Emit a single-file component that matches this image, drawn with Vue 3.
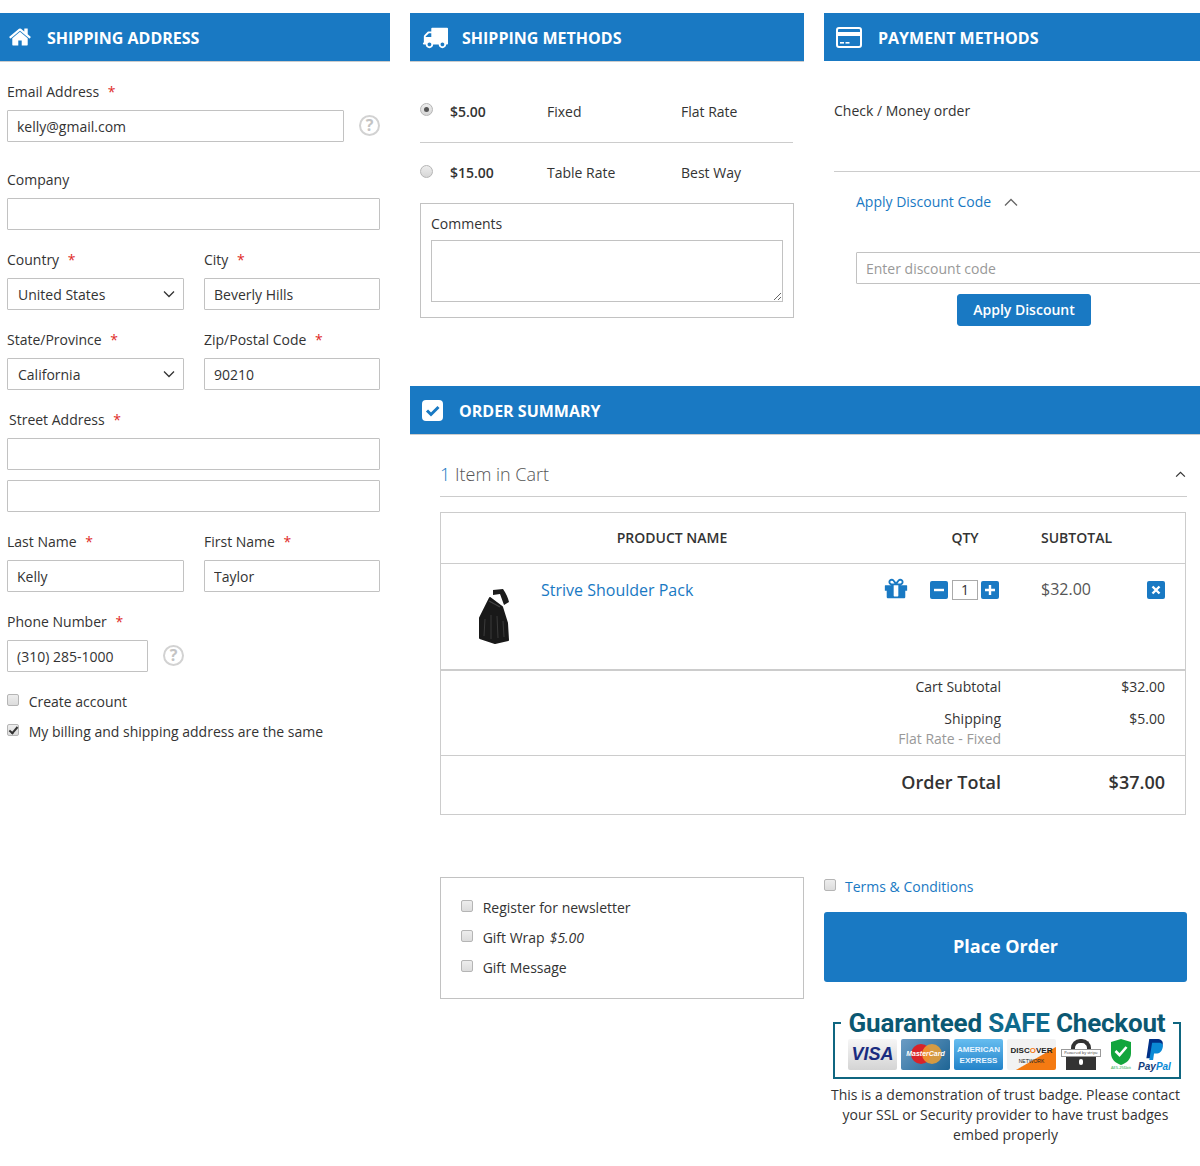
<script setup>
const methods = [
  { price: '$5.00', title: 'Fixed', carrier: 'Flat Rate', checked: true },
  { price: '$15.00', title: 'Table Rate', carrier: 'Best Way', checked: false }
]
const extras = ['Register for newsletter', 'Gift Wrap', 'Gift Message']
</script>

<template>
  <div class="page">
    <!-- 左栏：收货地址 -->
    <section class="address">
      <h2 class="bar bar-line">
        <svg class="bar-icon home" viewBox="0 0 1792 1792"><path fill="#fff" d="M1472 992v480q0 26-19 45t-45 19h-384v-384h-256v384h-384q-26 0-45-19t-19-45v-480q0-1 .5-3t.5-3l575-474 575 474q1 2 1 6zm223-69l-62 74q-8 9-21 11h-3q-13 0-21-7l-692-577-692 577q-12 8-24 7-13-2-21-11l-62-74q-8-10-7-23.5t11-21.5l719-599q32-26 76-26t76 26l244 204v-195q0-14 9-23t23-9h192q14 0 23 9t9 23v408l219 182q10 8 11 21.5t-7 23.5z"/></svg>
        <span class="bar-text">Shipping Address</span>
      </h2>
      <form class="form">
        <div class="field email">
          <label>Email Address <i>*</i></label>
          <div class="with-help">
            <input class="input" value="kelly@gmail.com" />
            <span class="help">?</span>
          </div>
        </div>
        <div class="field">
          <label>Company</label>
          <input class="input" />
        </div>
        <div class="two">
          <div class="field">
            <label>Country <i>*</i></label>
            <div class="select-wrap">
              <select class="input select"><option>United States</option></select>
              <svg class="caret" viewBox="0 0 12 8"><path d="M1 1.500l5 5 5-5" fill="none" stroke="#333" stroke-width="1.300"/></svg>
            </div>
          </div>
          <div class="field">
            <label>City <i>*</i></label>
            <input class="input" value="Beverly Hills" />
          </div>
        </div>
        <div class="two">
          <div class="field">
            <label>State/Province <i>*</i></label>
            <div class="select-wrap">
              <select class="input select"><option>California</option></select>
              <svg class="caret" viewBox="0 0 12 8"><path d="M1 1.500l5 5 5-5" fill="none" stroke="#333" stroke-width="1.300"/></svg>
            </div>
          </div>
          <div class="field">
            <label>Zip/Postal Code <i>*</i></label>
            <input class="input" value="90210" />
          </div>
        </div>
        <div class="field street">
          <label>Street Address <i>*</i></label>
          <input class="input" />
          <input class="input" />
        </div>
        <div class="two">
          <div class="field">
            <label>Last Name <i>*</i></label>
            <input class="input" value="Kelly" />
          </div>
          <div class="field">
            <label>First Name <i>*</i></label>
            <input class="input" value="Taylor" />
          </div>
        </div>
        <div class="field phone">
          <label>Phone Number <i>*</i></label>
          <div class="with-help">
            <input class="input" value="(310) 285-1000" />
            <span class="help">?</span>
          </div>
        </div>
        <label class="check"><input type="checkbox" class="box" /> Create account</label>
        <label class="check"><input type="checkbox" class="box" checked /> My billing and shipping address are the same</label>
      </form>
    </section>

    <div class="main">
      <div class="top">
        <!-- 配送方式 -->
        <section class="shipping">
          <h2 class="bar bar-line">
            <svg class="bar-icon truck" viewBox="0 0 1792 1792"><path fill="#fff" d="M640 1408q0-52-38-90t-90-38-90 38-38 90 38 90 90 38 90-38 38-90zm-384-512h384v-256h-158q-13 0-22 9l-195 195q-9 9-9 22v30zm1280 512q0-52-38-90t-90-38-90 38-38 90 38 90 90 38 90-38 38-90zm256-1088v1024q0 15-4 26.500t-13.500 18.500-16.500 11.500-23.500 6-22.500 2-25.500 0-22.500-.5q0 106-75 181t-181 75-181-75-75-181h-384q0 106-75 181t-181 75-181-75-75-181h-64q-3 0-22.500.5t-25.500 0-22.500-2-23.500-6-16.500-11.500-13.500-18.500-4-26.500q0-26 19-45t45-19v-320q0-8-.5-35t0-38 2.500-34.500 6.500-37 14-30.500 22.500-30l198-198q19-19 50.500-32t58.500-13h160v-192q0-26 19-45t45-19h1024q26 0 45 19t19 45z"/></svg>
            <span class="bar-text">Shipping Methods</span>
          </h2>
          <div class="rates">
            <div v-for="m in methods" :key="m.title" class="rate">
              <input type="radio" name="rate" class="radio" :checked="m.checked" />
              <b>{{ m.price }}</b>
              <span>{{ m.title }}</span>
              <span>{{ m.carrier }}</span>
            </div>
          </div>
          <div class="comments">
            <label>Comments</label>
            <textarea></textarea>
          </div>
        </section>

        <!-- 支付方式 -->
        <section class="payment">
          <h2 class="bar">
            <svg class="bar-icon card" viewBox="0 0 26 21">
              <rect x="1" y="1" width="24" height="19" rx="2" fill="none" stroke="#fff" stroke-width="2"/>
              <rect x="1" y="5" width="24" height="4" fill="#fff"/>
              <rect x="4" y="15" width="4" height="1.600" fill="#fff"/>
              <rect x="9.500" y="15" width="4" height="1.600" fill="#fff"/>
            </svg>
            <span class="bar-text">Payment Methods</span>
          </h2>
          <div class="pay-body">
            <p class="pay-name">Check / Money order</p>
            <div class="discount">
              <a class="discount-toggle">
                Apply Discount Code
                <svg viewBox="0 0 14 9" width="14" height="9"><path d="M1 7.500l6-6 6 6" fill="none" stroke="#666" stroke-width="1.300"/></svg>
              </a>
              <input class="input discount-input" placeholder="Enter discount code" />
              <div class="discount-action"><button type="button" class="btn-apply">Apply Discount</button></div>
            </div>
          </div>
        </section>
      </div>

      <!-- 订单汇总 -->
      <section class="summary">
        <h2 class="bar bar-line">
          <svg class="bar-icon tick" viewBox="0 0 21 21">
            <rect width="21" height="21" rx="4" fill="#fff"/>
            <path d="M5 10.500l4 4 7.500-7.500" fill="none" stroke="#1979c3" stroke-width="3"/>
          </svg>
          <span class="bar-text">Order Summary</span>
        </h2>
        <div class="summary-body">
          <div class="cart-title">
            <span><em>1</em> Item in Cart</span>
            <svg viewBox="0 0 12 8" width="11" height="7"><path d="M1 6.500l5-5 5 5" fill="none" stroke="#333" stroke-width="1.400"/></svg>
          </div>
          <div class="cart">
            <div class="cart-head">
              <span class="col-name">Product Name</span>
              <span class="col-qty">Qty</span>
              <span class="col-sub">Subtotal</span>
            </div>
            <div class="cart-item">
              <svg class="pack" viewBox="0 0 46 60">
                <path d="M23 5l10-1c3 4 5 9 6 13l-5 3-4-11-7 1z" fill="#1c1c1c"/>
                <path d="M20 13l12 9 5 16 1 17-13 3-15-5V33z" fill="#191919" stroke="#191919" stroke-width="2" stroke-linejoin="round"/>
                <path d="M15 34l-1 17M21 30v24M27 31l1 22M33 36l1 16" stroke="#3a3a3a" stroke-width="1" fill="none"/>
                <path d="M19 16l11 6" stroke="#444" stroke-width="1.300"/>
              </svg>
              <a class="item-name">Strive Shoulder Pack</a>
              <svg class="gift" viewBox="0 0 1792 1792"><path fill="#1979c3" d="M1056 1356v-716h-320v716q0 25 18 38.500t46 13.500h192q28 0 46-13.500t18-38.500zm-456-844h195l-126-161q-26-31-69-31-40 0-68 28t-28 68 28 68 68 28zm688-96q0-40-28-68t-68-28q-43 0-69 31l-125 161h194q40 0 68-28t28-68zm376 256v320q0 14-9 23t-23 9h-96v416q0 40-28 68t-68 28h-1088q-40 0-68-28t-28-68v-416h-96q-14 0-23-9t-9-23v-320q0-14 9-23t23-9h440q-93 0-158.500-65.500t-65.500-158.500 65.500-158.500 158.500-65.500q107 0 168 77l128 165 128-165q61-77 168-77 93 0 158.500 65.500t65.500 158.500-65.500 158.500-158.500 65.500h440q14 0 23 9t9 23z"/></svg>
              <div class="qty">
                <span class="sq"><svg viewBox="0 0 18 18"><path d="M4 9h10" stroke="#fff" stroke-width="2.400"/></svg></span>
                <input class="qty-input" value="1" />
                <span class="sq"><svg viewBox="0 0 18 18"><path d="M4 9h10M9 4v10" stroke="#fff" stroke-width="2.400"/></svg></span>
              </div>
              <span class="item-price">$32.00</span>
              <span class="sq remove"><svg viewBox="0 0 18 18"><path d="M5.500 5.500l7 7M12.500 5.500l-7 7" stroke="#fff" stroke-width="2.400"/></svg></span>
            </div>
            <div class="totals">
              <div class="total-row"><span>Cart Subtotal</span><span>$32.00</span></div>
              <div class="total-row ship">
                <span>Shipping<small>Flat Rate - Fixed</small></span><span>$5.00</span>
              </div>
            </div>
            <div class="grand"><span>Order Total</span><strong>$37.00</strong></div>
          </div>
        </div>

        <div class="bottom">
          <div class="options">
            <label v-for="x in extras" :key="x" class="check">
              <input type="checkbox" class="box" /> {{ x }}<em v-if="x === 'Gift Wrap'" class="wrap-price">$5.00</em>
            </label>
          </div>
          <div class="place">
            <label class="check terms"><input type="checkbox" class="box" /> <a>Terms &amp; Conditions</a></label>
            <button type="button" class="btn-place">Place Order</button>
            <!-- 信任徽章 -->
            <div class="badge">
              <div class="badge-title">Guaranteed <span>SAFE</span> Checkout</div>
              <div class="badge-row">
                <span class="logo visa">VISA</span>
                <span class="logo mc"><u></u><u></u><b>MasterCard</b></span>
                <span class="logo amex">AMERICAN<br />EXPRESS</span>
                <span class="logo disc"><b>DISC<em>O</em>VER</b><small>NETWORK</small></span>
                <span class="lock"><small>Powered by stripe</small><i></i></span>
                <span class="shield">
                  <svg viewBox="0 0 22 26" width="22" height="26">
                    <path d="M11 0l10 3v11c0 7-5 10-10 12C6 24 1 21 1 14V3z" fill="#12a53c"/>
                    <path d="M5.500 12l4 4 7-8" fill="none" stroke="#fff" stroke-width="2.600"/>
                  </svg>
                  <small>AES-256bit</small>
                </span>
                <span class="paypal">
                  <svg viewBox="0 0 20 24" width="20" height="23">
                    <path d="M4 0h8c4 0 7 2 6 6-1 5-4 7-8 7H7l-1 7H1z" fill="#003087"/>
                    <path d="M7 4h7c3 0 5 2 4 5-1 4-3 6-7 6H9l-1 7H4z" fill="#0a8ad6"/>
                  </svg>
                  <b>Pay<span>Pal</span></b>
                </span>
              </div>
            </div>
            <p class="badge-note">This is a demonstration of trust badge. Please contact your SSL or Security provider to have trust badges embed properly</p>
          </div>
        </div>
      </section>
    </div>
  </div>
</template>

<style>
html,
body {
  margin: 0;
  background: #fff;
}
</style>

<style scoped>
.page {
  display: flex;
  gap: 20px;
  width: 1200px;
  height: 1166px;
  box-sizing: border-box;
  padding-top: 13px;
  overflow: hidden;
  font-family: "Open Sans", sans-serif;
  font-size: 14px;
  line-height: 20px;
  color: #333;
}

.bar {
  display: flex;
  align-items: center;
  height: 48px;
  margin: 0;
  background: #1979c3;
  color: #fff;
  font-size: 16px;
  font-weight: 700;
  text-transform: uppercase;
  box-sizing: border-box;
}

.bar-text {
  margin-top: 2px;
}

.bar-line {
  box-shadow: 0 1px 0 #ccc;
}

.bar-icon {
  flex-shrink: 0;
}

.home {
  width: 24px;
  height: 24px;
  margin: 0 15px 0 8px;
}

.truck {
  width: 26px;
  height: 26px;
  margin: 0 14px 0 12px;
}

.card {
  width: 26px;
  height: 21px;
  margin: 0 16px 0 12px;
}

.tick {
  width: 21px;
  height: 21px;
  margin: 0 16px 0 12px;
}

/* 地址表单 */
.address {
  width: 390px;
  flex-shrink: 0;
}

.form {
  padding: 21px 10px 0 7px;
}

.field {
  margin-bottom: 20px;
}

.field.email {
  margin-bottom: 28px;
}

.field label {
  display: block;
  margin-bottom: 8px;
}

.field i {
  font-style: normal;
  color: #e02b27;
  margin-left: 5px;
}

.input {
  display: block;
  width: 100%;
  height: 32px;
  box-sizing: border-box;
  padding: 0 9px;
  border: 1px solid #c2c2c2;
  border-radius: 1px;
  background: #fff;
  font: 14px "Open Sans", sans-serif;
  color: #333;
  outline: none;
}

.input::placeholder {
  color: #999;
}

.with-help {
  display: flex;
  align-items: center;
}

.email .input {
  width: 337px;
}

.phone .input {
  width: 141px;
}

.help {
  width: 21px;
  height: 21px;
  box-sizing: border-box;
  margin: -2px 0 0 15px;
  border: 2px solid #d2d2d2;
  border-radius: 50%;
  color: #c4c4c4;
  font-size: 16px;
  font-weight: 700;
  line-height: 17px;
  text-align: center;
}

.two {
  display: grid;
  grid-template-columns: 177px 176px;
  gap: 20px;
}

.select-wrap {
  position: relative;
}

.select {
  appearance: none;
  padding-left: 10px;
}

.caret {
  position: absolute;
  right: 9px;
  top: 12px;
  width: 12px;
  height: 8px;
}

.street label {
  padding-left: 2px;
}

.street .input + .input {
  margin-top: 10px;
}

.phone {
  margin-bottom: 20px;
}

.check {
  display: flex;
  align-items: center;
  height: 20px;
  margin-bottom: 10px;
  white-space: pre;
}

.box {
  appearance: none;
  position: relative;
  flex-shrink: 0;
  width: 12px;
  height: 12px;
  margin: -5px 6px 0 0;
  border: 1px solid #b5b5b5;
  border-radius: 2px;
  background: linear-gradient(#ededed, #dcdcdc);
}

.box:checked::after {
  content: "";
  position: absolute;
  left: 3px;
  top: 0;
  width: 3px;
  height: 7px;
  border: solid #333;
  border-width: 0 2px 2px 0;
  transform: rotate(40deg);
}

/* 配送方式 */
.main {
  width: 790px;
  flex-shrink: 0;
}

.top {
  display: flex;
  gap: 20px;
  height: 373px;
}

.shipping {
  width: 394px;
  flex-shrink: 0;
}

.rates {
  margin: 20px 11px 0 10px;
}

.rate {
  display: grid;
  grid-template-columns: 30px 97px 134px 1fr;
  align-items: center;
  height: 61px;
}

.rate:first-child {
  border-bottom: 1px solid #ccc;
}

.rate b {
  font-weight: 600;
}

.rate:last-child {
  height: 60px;
}

.radio {
  appearance: none;
  position: relative;
  width: 13px;
  height: 13px;
  margin: -4px 0 0;
  border: 1px solid #b5b5b5;
  border-radius: 50%;
  background: linear-gradient(#ededed, #d6d6d6);
}

.radio:checked::after {
  content: "";
  position: absolute;
  left: 3px;
  top: 3px;
  width: 5px;
  height: 5px;
  border-radius: 50%;
  background: #555;
}

.comments {
  margin: 0 10px;
  height: 115px;
  box-sizing: border-box;
  padding: 10px;
  border: 1px solid #c2c2c2;
}

.comments label {
  display: block;
  margin-bottom: 6px;
}

.comments textarea {
  display: block;
  width: 100%;
  height: 62px;
  box-sizing: border-box;
  border: 1px solid #c2c2c2;
  outline: none;
}

/* 支付方式 */
.payment {
  width: 376px;
  flex-shrink: 0;
}

.pay-body {
  padding: 40px 0 0 10px;
}

.pay-name {
  margin: 0;
  height: 70px;
  border-bottom: 1px solid #ccc;
}

.discount {
  padding: 20px 0 0 22px;
}

.discount-toggle {
  display: flex;
  align-items: center;
  gap: 13px;
  color: #1979c3;
}

.discount-input {
  width: 360px;
  margin-top: 40px;
}

.discount-action {
  width: 336px;
  margin-top: 10px;
  text-align: center;
}

.btn-apply {
  width: 134px;
  height: 32px;
  padding: 0 0 2px;
  border: 1px solid #1979c3;
  border-radius: 3px;
  background: #1979c3;
  color: #fff;
  font: 600 14px "Open Sans", sans-serif;
}

/* 订单汇总 */
.summary-body {
  padding: 21px 13px 0 30px;
}

.cart-title {
  display: flex;
  align-items: center;
  justify-content: space-between;
  height: 42px;
  box-sizing: border-box;
  padding: 0 1px 3px 0;
  border-bottom: 1px solid #ccc;
  font-size: 18px;
  font-weight: 300;
  color: #555;
}

.cart-title em {
  font-style: normal;
  color: #1979c3;
}

.cart {
  width: 746px;
  box-sizing: border-box;
  margin-top: 15px;
  border: 1px solid #ccc;
}

.cart-head {
  height: 50px;
  line-height: 50px;
  border-bottom: 1px solid #ccc;
  font-weight: 600;
  text-transform: uppercase;
  display: grid;
  grid-template-columns: 462px 124px 1fr;
}

.col-name,
.col-qty {
  text-align: center;
}

.col-sub {
  padding-left: 14px;
}

.cart-item {
  display: flex;
  height: 105px;
  border-bottom: 2px solid #ccc;
  align-items: flex-start;
}

.pack {
  width: 46px;
  height: 60px;
  margin: 21px 0 0 29px;
  flex-shrink: 0;
}

.item-name {
  width: 342px;
  margin: 16px 0 0 25px;
  font-size: 16px;
  line-height: 20px;
  color: #1979c3;
}

.gift {
  width: 26px;
  height: 26px;
  margin: 12px 0 0 0;
  flex-shrink: 0;
}

.qty {
  display: flex;
  align-items: center;
  gap: 3px;
  width: 111px;
  margin: 16px 0 0 21px;
  flex-shrink: 0;
}

.sq {
  display: block;
  width: 18px;
  height: 18px;
  border-radius: 2px;
  background: #1979c3;
  flex-shrink: 0;
}

.sq svg {
  display: block;
}

.qty-input {
  width: 26px;
  height: 20px;
  box-sizing: border-box;
  margin-left: 1px;
  border: 1px solid #aaa;
  padding: 0 0 1px;
  text-align: center;
  font: 14px "Open Sans", sans-serif;
  color: #333;
  outline: none;
}

.item-price {
  width: 106px;
  margin-top: 15px;
  font-size: 16px;
  color: #555;
}

.remove {
  margin-top: 17px;
}

.totals {
  padding: 6px 20px 0 0;
  height: 85px;
  box-sizing: border-box;
  border-bottom: 1px solid #ccc;
}

.total-row {
  display: grid;
  grid-template-columns: 560px 1fr;
  text-align: right;
  margin-bottom: 12px;
}

.total-row small {
  display: block;
  font-size: 14px;
  color: #999;
}

.grand {
  display: grid;
  grid-template-columns: 560px 1fr;
  align-items: center;
  height: 58px;
  box-sizing: border-box;
  padding: 0 20px 6px 0;
  text-align: right;
  font-size: 18px;
  font-weight: 600;
}

.grand strong {
  font-weight: 600;
}

/* 底部 */
.bottom {
  display: flex;
  gap: 20px;
  margin: 62px 0 0 30px;
}

.options {
  width: 364px;
  height: 122px;
  box-sizing: border-box;
  padding: 20px;
  border: 1px solid #c2c2c2;
  flex-shrink: 0;
}

.wrap-price {
  margin-left: 5px;
}

.place {
  width: 363px;
}

.terms {
  margin: 0 0 15px;
}

.terms .box {
  margin-right: 9px;
}

.terms a {
  color: #1979c3;
}

.btn-place {
  display: block;
  width: 100%;
  height: 70px;
  padding: 0 0 2px;
  border: none;
  border-radius: 3px;
  background: #1979c3;
  color: #fff;
  font: 700 18px "Open Sans", sans-serif;
}

.badge {
  position: relative;
  width: 348px;
  height: 57px;
  box-sizing: border-box;
  margin: 40px 0 0 9px;
  border: 2px solid #0f6680;
  padding-top: 15px;
}

.badge-title {
  position: absolute;
  left: 6px;
  right: 6px;
  top: -15px;
  background: #fff;
  text-align: center;
  font-family: Roboto, sans-serif;
  font-size: 26px;
  font-weight: 700;
  line-height: 28px;
  color: #0b5872;
  letter-spacing: -0.2px;
  white-space: nowrap;
}

.badge-title span {
  color: #0f6a8c;
}

.badge-row {
  display: flex;
  align-items: flex-start;
  padding-left: 13px;
  gap: 4px;
}

.logo {
  position: relative;
  display: block;
  width: 49px;
  height: 31px;
  overflow: hidden;
  border-radius: 2px;
  flex-shrink: 0;
  text-align: center;
}

.visa {
  background: linear-gradient(#f6f6f6, #d4d4d4);
  color: #1a2c80;
  font: italic 700 18px/31px "Liberation Sans", sans-serif;
}

.mc {
  background: linear-gradient(135deg, #6b9cc4, #1e6595);
}

.mc u {
  position: absolute;
  top: 5px;
  left: 10px;
  width: 20px;
  height: 20px;
  border-radius: 50%;
  background: #d8232a;
}

.mc u + u {
  left: 21px;
  background: #f0a030;
  opacity: 0.85;
}

.mc b {
  position: absolute;
  left: 0;
  right: 0;
  top: 9px;
  color: #fff;
  font: italic 700 7px/12px "Liberation Sans", sans-serif;
}

.amex {
  background: linear-gradient(#66bdf0, #2383c9);
  color: #e8f5ff;
  font: 700 8px/11px "Liberation Sans", sans-serif;
  padding-top: 5px;
  box-sizing: border-box;
}

.disc {
  background: linear-gradient(150deg, #f2f2f2 60%, #f47a12 62%);
  color: #222;
  font: 700 8px/10px "Liberation Sans", sans-serif;
  padding-top: 7px;
  box-sizing: border-box;
}

.disc b,
.disc small {
  display: block;
}

.disc em {
  font-style: normal;
  color: #f47a12;
}

.disc small {
  font-size: 5px;
  font-weight: 400;
}

.lock {
  position: relative;
  display: block;
  width: 40px;
  height: 31px;
  margin-left: 1px;
  flex-shrink: 0;
}

.lock::before {
  content: "";
  position: absolute;
  left: 10px;
  top: 0;
  width: 12px;
  height: 12px;
  border: 4px solid #333;
  border-bottom: none;
  border-radius: 9px 9px 0 0;
}

.lock::after {
  content: "";
  position: absolute;
  left: 5px;
  right: 5px;
  top: 11px;
  bottom: 0;
  background: #333;
}

.lock small {
  position: absolute;
  left: 0;
  right: 0;
  top: 10px;
  height: 8px;
  box-sizing: border-box;
  z-index: 1;
  background: #fff;
  border: 1px solid #999;
  color: #333;
  font-size: 4px;
  line-height: 6px;
  text-align: center;
  white-space: nowrap;
  overflow: hidden;
}

.lock i {
  position: absolute;
  left: 18px;
  top: 20px;
  z-index: 1;
  width: 4px;
  height: 6px;
  border-radius: 2px;
  background: #fff;
}

.shield {
  display: flex;
  flex-direction: column;
  align-items: center;
  width: 22px;
  margin-left: 5px;
  flex-shrink: 0;
}

.shield svg {
  display: block;
}

.shield small {
  color: #12a53c;
  font-size: 4px;
  line-height: 5px;
  white-space: nowrap;
}

.paypal {
  display: flex;
  flex-direction: column;
  align-items: center;
  width: 33px;
  margin-left: 2px;
  flex-shrink: 0;
}

.paypal b {
  color: #123a7a;
  font: italic 700 10px/10px "Liberation Sans", sans-serif;
}

.paypal b span {
  color: #0a8ad6;
}

.badge-note {
  margin: 6px 0 0;
  text-align: center;
}
</style>
